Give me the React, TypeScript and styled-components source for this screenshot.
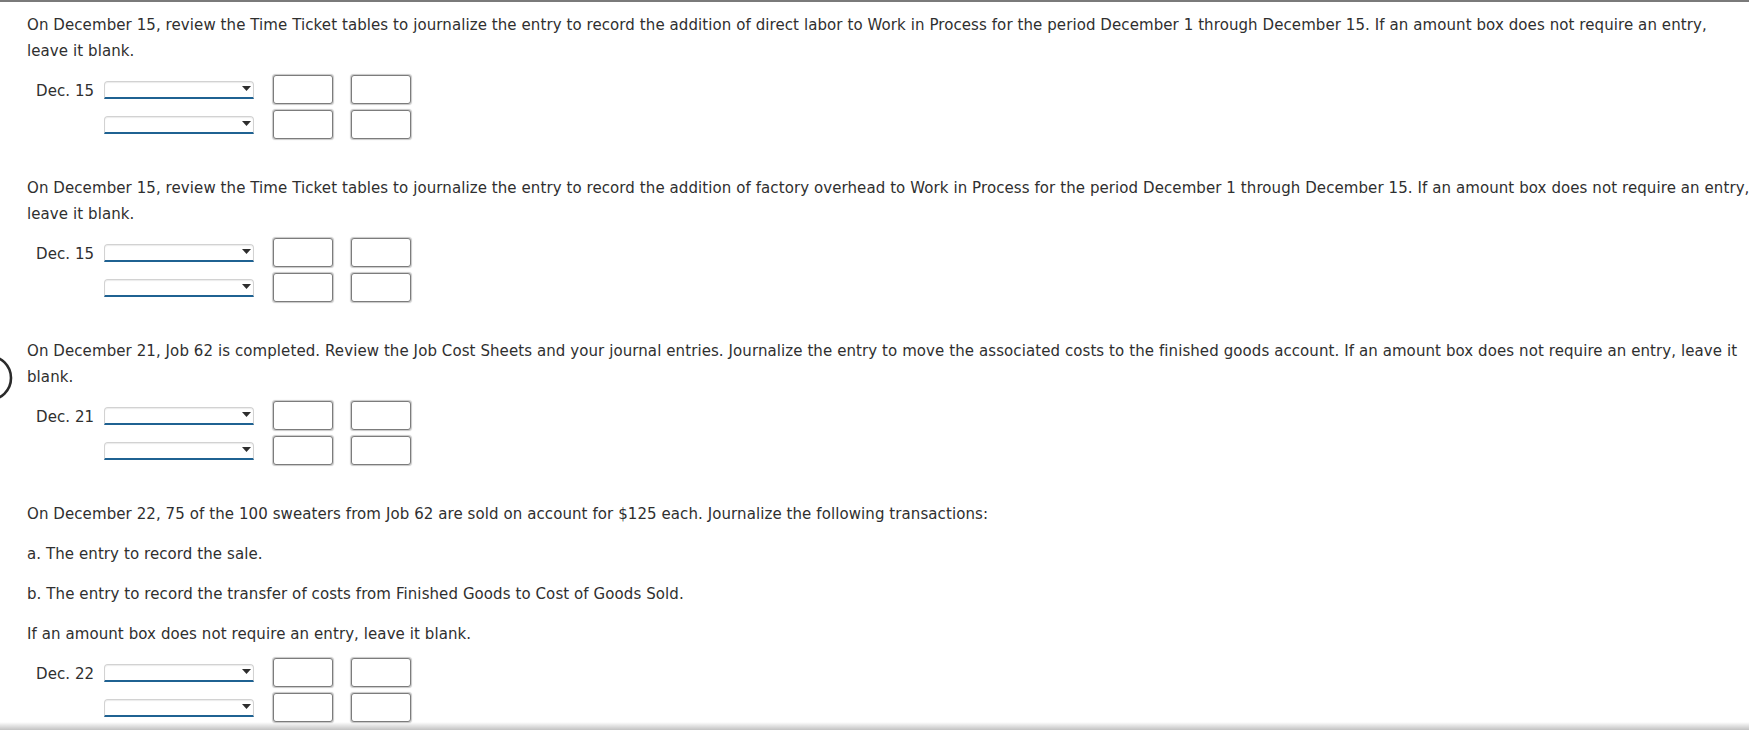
import React from "react";
import styled, { createGlobalStyle } from "styled-components";

const GlobalStyle = createGlobalStyle`
  html, body {
    margin: 0;
    padding: 0;
    background: #ffffff;
  }
  body {
    font-family: "DejaVu Sans", Verdana, sans-serif;
    font-size: 15px;
    color: #2f2f2f;
  }
`;

const Page = styled.div`
  position: relative;
  box-sizing: border-box;
  height: 730px;
  overflow: hidden;
  border-top: 2px solid #7a7a7a;
  padding: 10px 0 0 27px;

  &::after {
    content: "";
    position: absolute;
    left: 0;
    right: 0;
    bottom: 0;
    height: 8px;
    background: linear-gradient(to bottom, rgba(0, 0, 0, 0), rgba(0, 0, 0, 0.24));
  }
`;

const Question = styled.section`
  position: relative;
  margin-bottom: 36px;
`;

const Para = styled.p`
  margin: 0 0 14px;
  line-height: 26px;
  white-space: nowrap;
  letter-spacing: 0.085px;

  &:last-of-type {
    margin-bottom: 11px;
  }
`;

const Line = styled.span`
  display: block;
`;

const Journal = styled.div`
  display: flex;
  flex-direction: column;
  gap: 6px;
`;

const EntryRow = styled.div`
  display: flex;
  align-items: center;
  height: 29px;
`;

const DateLabel = styled.div`
  box-sizing: border-box;
  width: 77px;
  padding-left: 9px;
  padding-top: 2px;
  white-space: nowrap;
  letter-spacing: 0.085px;
`;

const AccountSelect = styled.div`
  box-sizing: border-box;
  width: 150px;
  height: 18px;
  margin-right: 19px;
  display: flex;
  align-items: center;
  justify-content: flex-end;
  padding: 0 2px 2px 0;
  background: #ffffff;
  border: 1px solid #d2d2d2;
  border-bottom: 2px solid #1f6292;
  border-radius: 4px 4px 0 0;
  box-shadow: inset 0 1px 1px rgba(0, 0, 0, 0.08);
`;

const AmountBox = styled.div`
  box-sizing: border-box;
  width: 60px;
  height: 29px;
  margin-right: 18px;
  background: #ffffff;
  border: 1px solid #7c7c7c;
  border-radius: 3px;
  box-shadow: 0 0 1px 0.5px rgba(0, 0, 0, 0.22);
`;

const EdgeArc = styled.svg`
  position: absolute;
  left: -27px;
  top: 16px;
`;

const Arrow = () => (
  <svg width="9" height="5" viewBox="0 0 9 5">
    <polygon points="0,0 9,0 4.5,5" fill="#2e2e2e" />
  </svg>
);

const Entry: React.FC<{ date?: string }> = ({ date }) => (
  <EntryRow>
    <DateLabel>{date ?? ""}</DateLabel>
    <AccountSelect>
      <Arrow />
    </AccountSelect>
    <AmountBox />
    <AmountBox />
  </EntryRow>
);

const JournalTable: React.FC<{ date: string }> = ({ date }) => (
  <Journal>
    <Entry date={date} />
    <Entry />
  </Journal>
);

const questions: { paras: string[][]; date: string; arc?: boolean }[] = [
  {
    paras: [
      [
        "On December 15, review the Time Ticket tables to journalize the entry to record the addition of direct labor to Work in Process for the period December 1 through December 15. If an amount box does not require an entry,",
        "leave it blank.",
      ],
    ],
    date: "Dec. 15",
  },
  {
    paras: [
      [
        "On December 15, review the Time Ticket tables to journalize the entry to record the addition of factory overhead to Work in Process for the period December 1 through December 15. If an amount box does not require an entry,",
        "leave it blank.",
      ],
    ],
    date: "Dec. 15",
  },
  {
    paras: [
      [
        "On December 21, Job 62 is completed. Review the Job Cost Sheets and your journal entries. Journalize the entry to move the associated costs to the finished goods account. If an amount box does not require an entry, leave it",
        "blank.",
      ],
    ],
    date: "Dec. 21",
    arc: true,
  },
  {
    paras: [
      [
        "On December 22, 75 of the 100 sweaters from Job 62 are sold on account for $125 each. Journalize the following transactions:",
      ],
      ["a. The entry to record the sale."],
      ["b. The entry to record the transfer of costs from Finished Goods to Cost of Goods Sold."],
      ["If an amount box does not require an entry, leave it blank."],
    ],
    date: "Dec. 22",
  },
];

export default function App() {
  return (
    <>
      <GlobalStyle />
      <Page>
        {questions.map((q, i) => (
          <Question key={i}>
            {q.arc && (
              <EdgeArc width="15" height="48" viewBox="0 0 15 48">
                <circle cx="-11" cy="24" r="22" fill="none" stroke="#2b2b2b" strokeWidth="2.6" />
              </EdgeArc>
            )}
            {q.paras.map((lines, j) => (
              <Para key={j}>
                {lines.map((l, k) => (
                  <Line key={k}>{l}</Line>
                ))}
              </Para>
            ))}
            <JournalTable date={q.date} />
          </Question>
        ))}
      </Page>
    </>
  );
}
